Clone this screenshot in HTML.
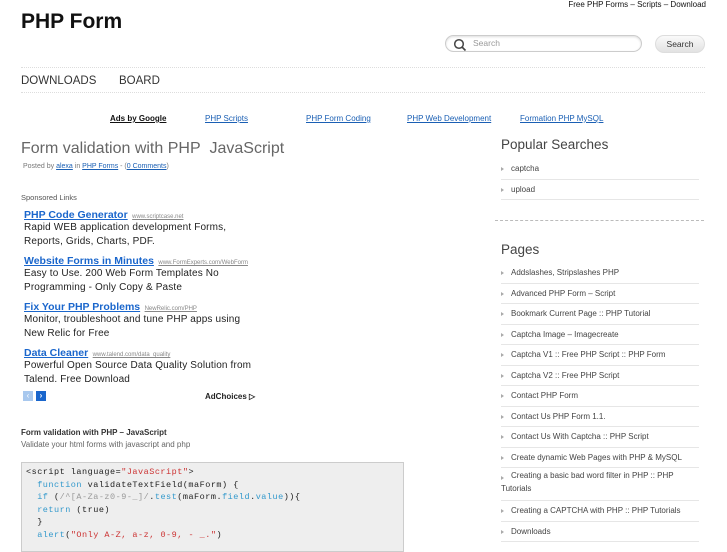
<!DOCTYPE html>
<html><head><meta charset="utf-8"><style>
*{margin:0;padding:0;box-sizing:border-box}
body{width:727px;height:545px;overflow:hidden;background:#fff;font-family:"Liberation Sans",sans-serif;color:#333;position:relative}
.a{position:absolute;white-space:nowrap}
a{color:#1a5fb4;text-decoration:underline}
.side{position:absolute;left:501px;width:198px}
.side div{height:20.5px;border-bottom:1px solid #e6e6e6;font-size:8px;color:#444;padding-top:5px;padding-left:10px;position:relative}
.side div:before{content:"";position:absolute;left:0;top:8px;border-left:3px solid #aaa;border-top:2px solid transparent;border-bottom:2px solid transparent}
.ad div{height:14px;line-height:14px}
.ad a{font-weight:bold;font-size:10.5px;color:#1a66cc}
.ad small{font-size:6px;color:#888;text-decoration:underline}
.ad p{font-size:10px;line-height:13.5px;color:#222;height:32px;letter-spacing:0.15px}
pre{font-family:"Liberation Mono",monospace;font-size:8.5px;line-height:12.6px;color:#222;letter-spacing:0.5px}
</style></head><body>
<div class="a" style="right:21px;top:0;font-size:8px;color:#111">Free PHP Forms – Scripts – Download</div>
<div class="a" style="left:21px;top:10px;font-size:21px;font-weight:bold;color:#111">PHP Form</div>
<div class="a" style="left:445px;top:35px;width:197px;height:17px;border:1px solid #ccc;border-radius:9px;box-shadow:inset 0 1px 2px #ddd"></div>
<svg class="a" style="left:453px;top:38px" width="14" height="14"><circle cx="6" cy="6" r="4.3" fill="none" stroke="#444" stroke-width="1.5"/><line x1="9" y1="9" x2="12.5" y2="12.5" stroke="#444" stroke-width="1.6"/></svg>
<div class="a" style="left:473px;top:38px;font-size:8.5px;color:#999">Search</div>
<div class="a" style="left:655px;top:35px;width:50px;height:18px;border-radius:9px;background:linear-gradient(#fafafa,#e2e2e2);border:1px solid #ddd;font-size:8.5px;text-align:center;line-height:16px;color:#333">Search</div>
<div class="a" style="left:21px;top:67px;width:684px;border-top:1px dotted #ddd"></div>
<div class="a" style="left:21px;top:75px;font-size:11.5px;color:#333">DOWNLOADS</div>
<div class="a" style="left:119px;top:75px;font-size:11.5px;color:#333">BOARD</div>
<div class="a" style="left:21px;top:92px;width:684px;border-top:1px dotted #ddd"></div>
<div class="a" style="left:110px;top:114px;font-size:8px;font-weight:bold;color:#111;text-decoration:underline">Ads by Google</div>
<a class="a" style="left:205px;top:114px;font-size:8px">PHP Scripts</a>
<a class="a" style="left:306px;top:114px;font-size:8px">PHP Form Coding</a>
<a class="a" style="left:407px;top:114px;font-size:8px">PHP Web Development</a>
<a class="a" style="left:520px;top:114px;font-size:8px">Formation PHP MySQL</a>
<div class="a" style="left:21px;top:140px;font-size:16px;color:#666">Form validation with PHP&nbsp; JavaScript</div>
<div class="a" style="left:23px;top:163px;font-size:7px;color:#777">Posted by <a>alexa</a> in <a>PHP Forms</a> - (<a>0 Comments</a>)</div>
<div class="a" style="left:21px;top:193px;font-size:7.5px;color:#555">Sponsored Links</div>
<div class="a ad" style="left:24px;top:207px">
<div><a>PHP Code Generator</a> <small>www.scriptcase.net</small></div>
<p>Rapid WEB application development Forms,<br>Reports, Grids, Charts, PDF.</p>
<div><a>Website Forms in Minutes</a> <small>www.FormExperts.com/WebForm</small></div>
<p>Easy to Use. 200 Web Form Templates No<br>Programming - Only Copy &amp; Paste</p>
<div><a>Fix Your PHP Problems</a> <small>NewRelic.com/PHP</small></div>
<p>Monitor, troubleshoot and tune PHP apps using<br>New Relic for Free</p>
<div><a>Data Cleaner</a> <small>www.talend.com/data_quality</small></div>
<p>Powerful Open Source Data Quality Solution from<br>Talend. Free Download</p>
</div>
<div class="a" style="left:23px;top:391px;width:10px;height:10px;background:#a8c8ee;color:#fff;font-size:8px;text-align:center;line-height:10px">‹</div>
<div class="a" style="left:36px;top:391px;width:10px;height:10px;background:#1a66cc;color:#fff;font-size:8px;text-align:center;line-height:10px;font-weight:bold">›</div>
<div class="a" style="left:205px;top:392px;font-size:8px;font-weight:bold;color:#222">AdChoices ▷</div>
<div class="a" style="left:21px;top:428px;font-size:8px;font-weight:bold;color:#333">Form validation with PHP – JavaScript</div>
<div class="a" style="left:21px;top:440px;font-size:8px;color:#666">Validate your html forms with javascript and php</div>
<div class="a" style="left:21px;top:462px;width:383px;height:90px;background:#eee;border:1px solid #ccc;padding:3px 4px">
<pre>&lt;script language=<span style="color:#c33">"JavaScript"</span>&gt;
  <span style="color:#39c">function</span> validateTextField(maForm) {
  <span style="color:#39c">if</span> (<span style="color:#999">/^[A-Za-z0-9-_]/</span>.<span style="color:#39c">test</span>(maForm.<span style="color:#39c">field</span>.<span style="color:#39c">value</span>)){
  <span style="color:#39c">return</span> (true)
  }
  <span style="color:#39c">alert</span>(<span style="color:#c33">"Only A-Z, a-z, 0-9, - _."</span>)</pre></div>
<div class="a" style="left:501px;top:137px;font-size:13.5px;color:#444">Popular Searches</div>
<div class="side" style="top:159px"><div>captcha</div><div>upload</div></div>
<div class="a" style="left:495px;top:220px;width:209px;border-top:1px dashed #bbb"></div>
<div class="a" style="left:501px;top:242px;font-size:13.5px;color:#444">Pages</div>
<div class="side" style="top:263px">
<div>Addslashes, Stripslashes PHP</div><div>Advanced PHP Form – Script</div><div>Bookmark Current Page :: PHP Tutorial</div><div>Captcha Image – Imagecreate</div><div>Captcha V1 :: Free PHP Script :: PHP Form</div><div>Captcha V2 :: Free PHP Script</div><div>Contact PHP Form</div><div>Contact Us PHP Form 1.1.</div><div>Contact Us With Captcha :: PHP Script</div><div>Create dynamic Web Pages with PHP &amp; MySQL</div><div style="height:33px;white-space:normal;line-height:12.5px;padding-top:2px">Creating a basic bad word filter in PHP :: PHP<br><span style="margin-left:-10px">Tutorials</span></div><div>Creating a CAPTCHA with PHP :: PHP Tutorials</div><div>Downloads</div>
</div>
</body></html>
